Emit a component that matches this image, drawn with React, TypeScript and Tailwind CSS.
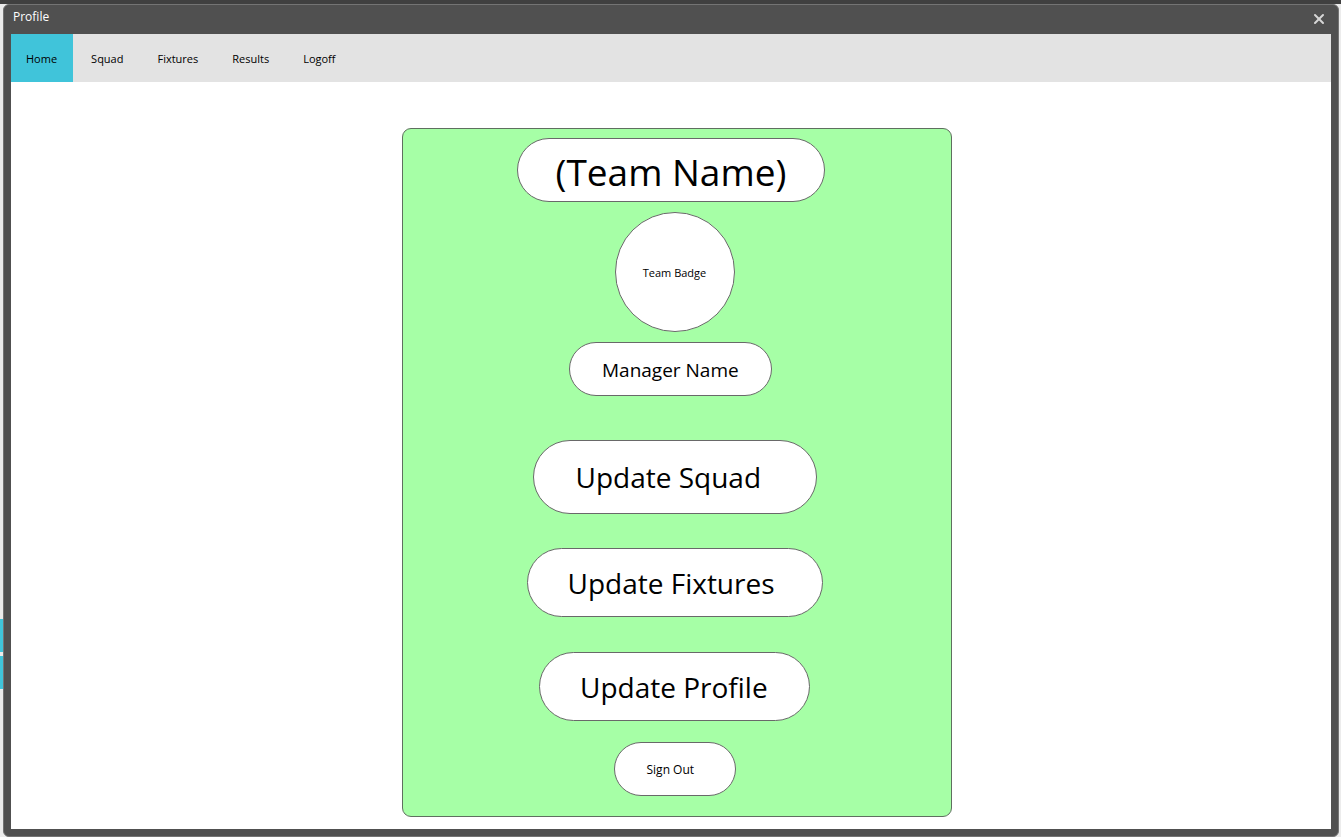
import { X } from "lucide-react";

const navItems = ["Home", "Squad", "Fixtures", "Results", "Logoff"];

const pill = "rounded-full border border-[#696969] bg-white text-left text-black whitespace-nowrap";

function TitleBar() {
  return (
    <header className="flex h-[29px] items-start justify-between pl-[9px] pr-[11px]">
      <h1 className="pt-1 text-[12px] leading-4 text-white">Profile</h1>
      <button type="button" aria-label="Close" className="pt-[6px] text-[#d6d6d6]">
        <X size={16} strokeWidth={3} />
      </button>
    </header>
  );
}

function NavBar() {
  return (
    <nav className="flex h-12 gap-[3px] bg-[#e3e3e3]">
      {navItems.map((item) => (
        <a
          key={item}
          href={`#${item.toLowerCase()}`}
          aria-current={item === "Home" ? "page" : undefined}
          className={
            item === "Home"
              ? "flex items-center bg-[#40c4da] pr-4 pl-[15px] pt-[2px] text-[11px] leading-4 text-black"
              : "flex items-center pr-4 pl-[15px] pt-[2px] text-[11px] leading-4 text-black"
          }
        >
          {item}
        </a>
      ))}
    </nav>
  );
}

function ProfileCard() {
  return (
    <section className="flex w-full max-w-[550px] flex-col items-center rounded-[9px] border border-[#5f6f5f] bg-[#a6ffa6] pt-[9px] pr-[5px] pb-5">
      <h2 className={`${pill} mr-2 h-16 w-[308px] pl-[38px] pt-[7px] text-[37px] leading-[52px]`}>(Team Name)</h2>
      <div className="mt-[10px] flex size-[120px] items-center justify-center rounded-full border border-[#696969] bg-white pt-[2px] text-[11px] leading-4 text-black">
        Team Badge
      </div>
      <p className={`${pill} mr-2 mt-[10px] h-[54px] w-[203px] pl-8 pt-[14px] text-[19px] leading-[26px]`}>
        Manager Name
      </p>
      <button type="button" className={`${pill} mt-11 h-[74px] w-[284px] pl-[42px] text-[28px] leading-10`}>
        Update Squad
      </button>
      <button type="button" className={`${pill} mt-[34px] h-[69px] w-[296px] pl-10 text-[28px] leading-10`}>
        Update Fixtures
      </button>
      <button type="button" className={`${pill} mt-[35px] h-[69px] w-[271px] pl-10 text-[28px] leading-10`}>
        Update Profile
      </button>
      <button type="button" className={`${pill} mt-[21px] h-[54px] w-[122px] pl-8 pt-[2px] text-[12px] leading-4`}>
        Sign Out
      </button>
    </section>
  );
}

export default function App() {
  return (
    <div className="relative flex min-h-screen flex-col border-t-4 border-[#404040] bg-[#ececec] pr-[2px] pl-[3px] font-['Open_Sans','Noto_Sans',sans-serif]">
      <div className="absolute top-[615px] left-0 flex w-[3px] flex-col gap-1">
        <div className="h-[33px] bg-[#40c4da]" />
        <div className="h-[33px] bg-[#40c4da]" />
      </div>
      <div className="flex grow flex-col rounded-md border border-[#747474] bg-[#505050]">
        <TitleBar />
        <div className="mx-[7px] mb-[7px] flex grow flex-col bg-white">
          <NavBar />
          <main className="flex justify-center pt-[46px] pb-3 pl-3">
            <ProfileCard />
          </main>
        </div>
      </div>
    </div>
  );
}
